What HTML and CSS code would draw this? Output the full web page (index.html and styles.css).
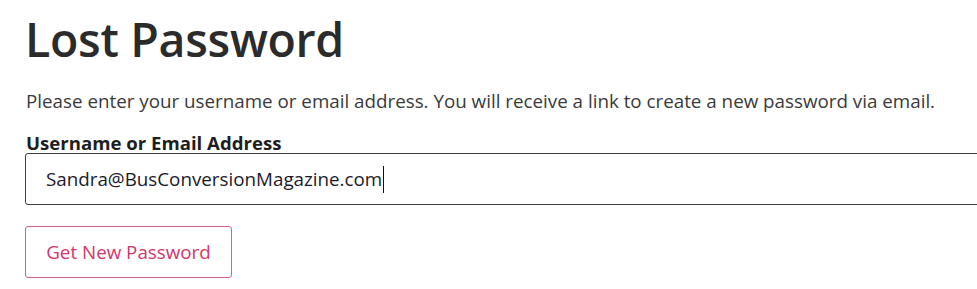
FILE: index.html
```html
<!DOCTYPE html>
<html lang="en">
<head>
<meta charset="utf-8">
<title>Lost Password</title>
<link rel="stylesheet" href="styles.css">
</head>
<body>
<main class="page">
  <h1 class="title">Lost Password</h1>
  <p class="intro">Please enter your username or email address. You will receive a link to create a new password via email.</p>
  <form class="form">
    <label class="label" for="user">Username or Email Address</label>
    <div class="field"><span class="value">Sandra@BusConversionMagazine.com</span><span class="caret"></span></div>
    <button class="btn" type="button">Get New Password</button>
  </form>
</main>
</body>
</html>
```

FILE: styles.css
```css
html, body {
  margin: 0;
  padding: 0;
  background: #ffffff;
  overflow: hidden;
}
body {
  width: 977px;
  height: 289px;
  font-family: "Open Sans", "Noto Sans", sans-serif;
}
.page {
  padding: 12px 0 0 25px;
}
.title {
  margin: 0;
  font-size: 46.5px;
  font-weight: 600;
  line-height: 54px;
  color: #2b2b2b;
  letter-spacing: -0.3px;
}
.intro {
  margin: 21px 0 0 1px;
  font-size: 18.8px;
  line-height: 28px;
  color: #3a3a3a;
}
.form {
  display: flex;
  flex-direction: column;
  align-items: flex-start;
  margin-top: 18px;
}
.label {
  font-size: 18.6px;
  font-weight: 700;
  line-height: 20px;
  color: #1e1e1e;
  margin-left: 1px;
}
.field {
  box-sizing: border-box;
  width: 1000px;
  height: 52px;
  border: 1px solid #3c3c3c;
  border-radius: 3px;
  display: flex;
  align-items: center;
  padding-left: 20px;
}
.value {
  font-size: 18.8px;
  color: #1a1a2a;
}
.caret {
  width: 1px;
  height: 27px;
  background: #111;
  margin-left: 1px;
}
.btn {
  margin-top: 21px;
  box-sizing: border-box;
  width: 207px;
  height: 52px;
  border: 1px solid #d9608a;
  border-radius: 3px;
  background: #fff;
  color: #d1376a;
  font-family: inherit;
  font-size: 18.8px;
  padding: 0;
}
```
